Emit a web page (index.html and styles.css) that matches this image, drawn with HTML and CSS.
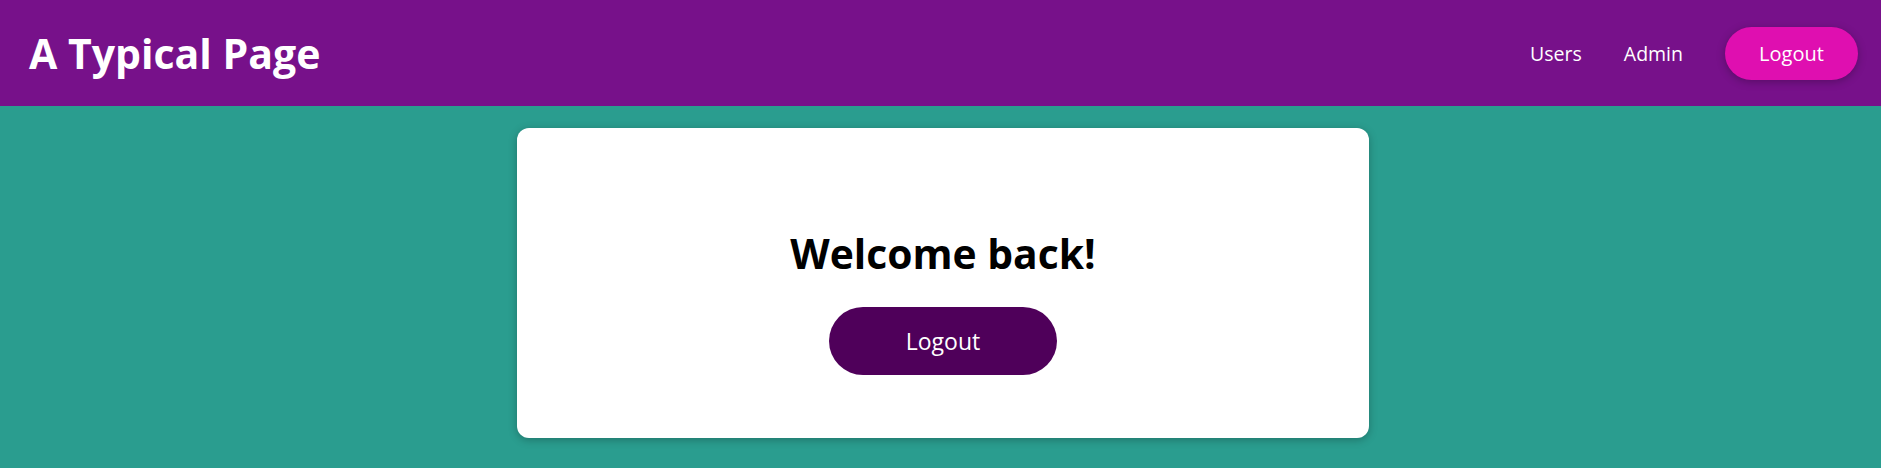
FILE: index.html
```html
<!DOCTYPE html>
<html lang="en">
<head>
<meta charset="utf-8">
<title>A Typical Page</title>
<link rel="stylesheet" href="styles.css">
</head>
<body>
<header class="header">
  <h1 class="logo">A Typical Page</h1>
  <nav class="nav">
    <a class="nav-link" href="#">Users</a>
    <a class="nav-link" href="#">Admin</a>
    <button class="nav-button">Logout</button>
  </nav>
</header>
<main class="main">
  <section class="card">
    <h2 class="card-title">Welcome back!</h2>
    <button class="card-button">Logout</button>
  </section>
</main>
</body>
</html>
```

FILE: styles.css
```css
* { box-sizing: border-box; }
html, body { margin: 0; padding: 0; }
body {
  font-family: "Open Sans", "Noto Sans", sans-serif;
  background: #2a9d8f;
  min-height: 100vh;
}
.header {
  height: 106px;
  background: #77118a;
  display: flex;
  align-items: center;
  justify-content: space-between;
  padding: 0 23px 0 29px;
}
.logo {
  margin: 0;
  color: #fff;
  font-size: 41px;
  font-weight: 700;
}
.nav {
  display: flex;
  align-items: center;
}
.nav-link {
  color: #fff;
  text-decoration: none;
  font-size: 19.5px;
  margin-right: 42px;
}
.nav-button {
  width: 133px;
  height: 53px;
  border: none;
  border-radius: 27px;
  background: #df0fb0;
  color: #fff;
  font-family: inherit;
  font-size: 20px;
  box-shadow: 0 2px 8px rgba(0,0,0,0.26);
}
.main {
  display: flex;
  justify-content: center;
  padding: 22px 0 0 5px;
}
.card {
  width: 852px;
  height: 310px;
  background: #fff;
  border-radius: 12px;
  box-shadow: 0 2px 8px rgba(0,0,0,0.26);
  display: flex;
  flex-direction: column;
  align-items: center;
  padding-top: 97px;
}
.card-title {
  margin: 0 0 26px;
  font-size: 40.8px;
  font-weight: 700;
  color: #000;
}
.card-button {
  width: 228px;
  height: 68px;
  border: none;
  border-radius: 34px;
  background: #4f005a;
  color: #fff;
  font-family: inherit;
  font-size: 23px;
}
```
